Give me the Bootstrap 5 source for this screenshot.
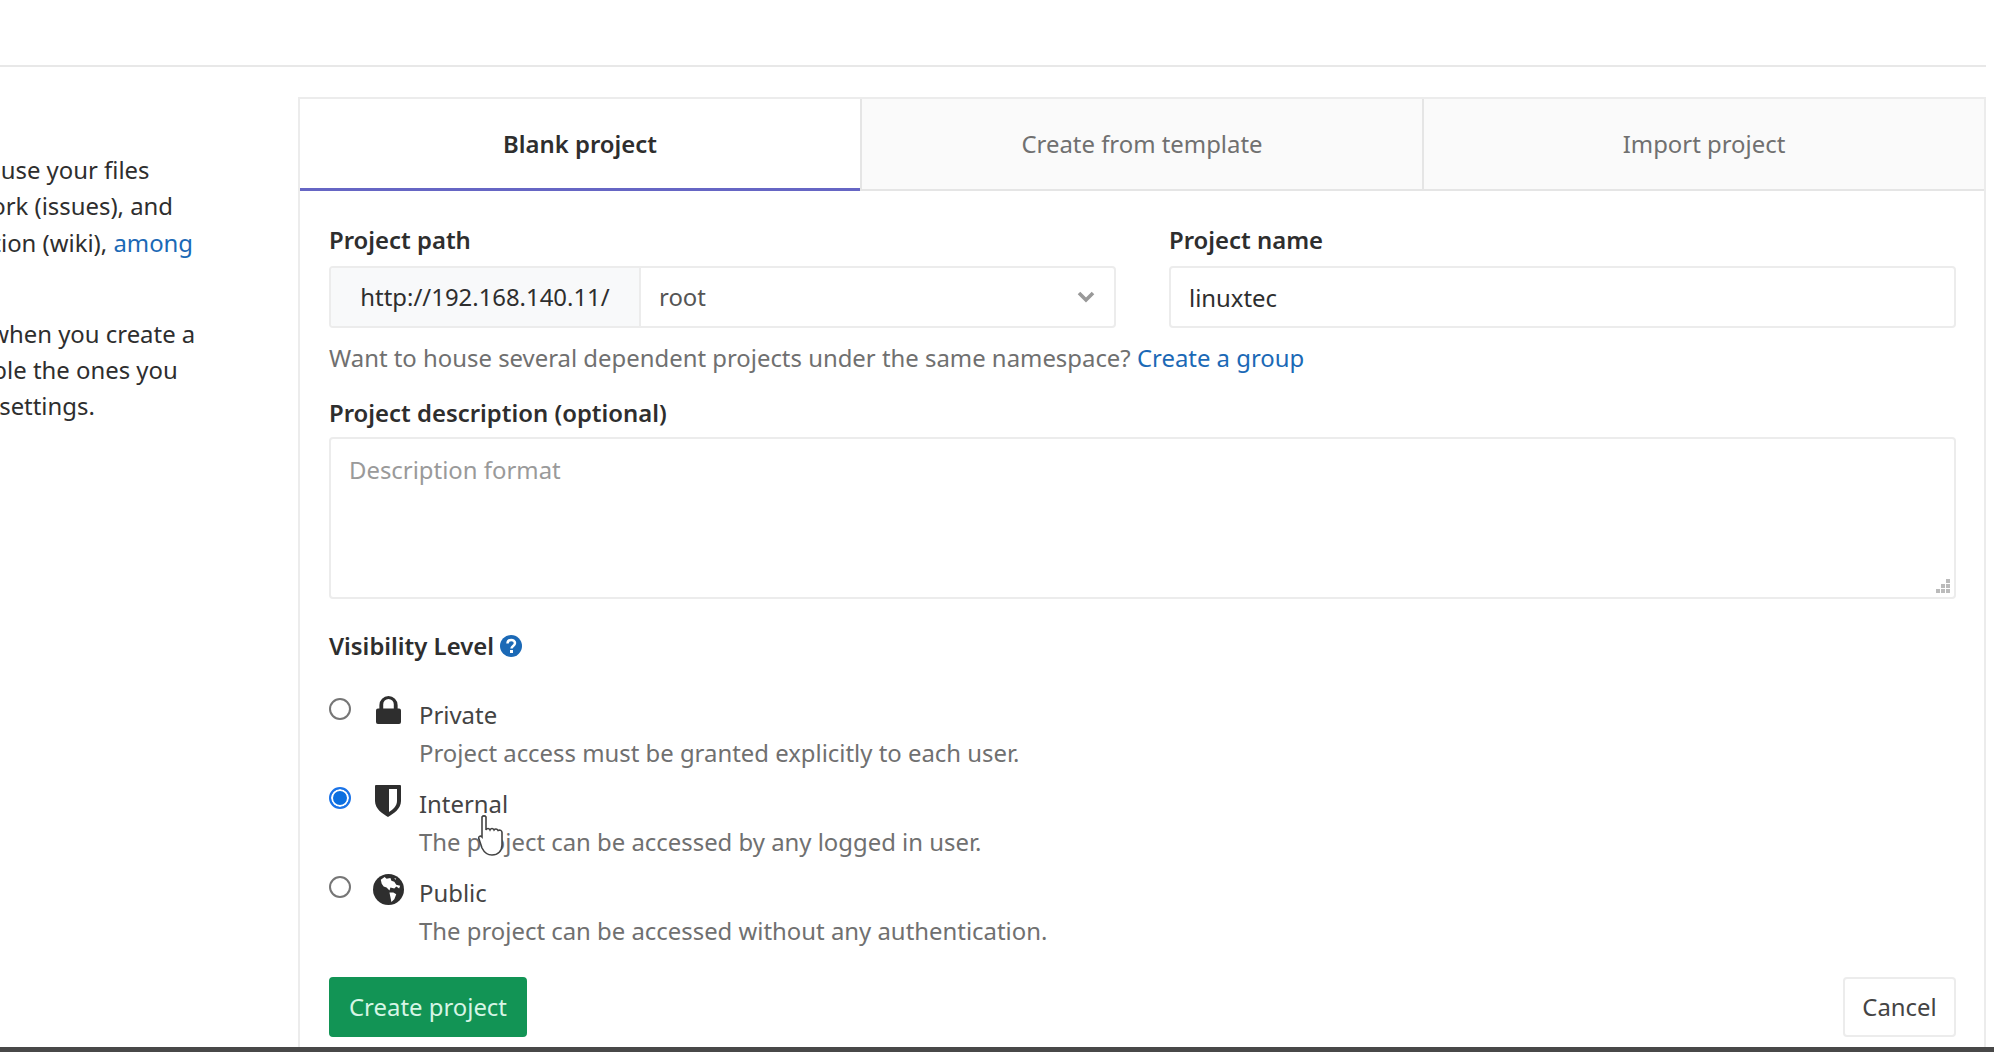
<!DOCTYPE html>
<html lang="en"><head><meta charset="utf-8"><title>New project</title>
<link rel="stylesheet" href="https://cdn.jsdelivr.net/npm/bootstrap@5.3.0/dist/css/bootstrap.min.css">
<style>
html,body{height:100%;overflow:hidden}
body{font-family:"Noto Sans","Open Sans",sans-serif;font-size:23.9px;color:#2e2e2e;background:#fff;position:relative}
.topgap{height:67px;border-bottom:2px solid #e8e8e8;margin-right:8px}
.pagewrap{padding-top:30px;margin-right:8px}
.sidecol{width:298px;flex:none;overflow:hidden;padding-top:55px;color:#2e2e2e;line-height:36.3px}
.sideinner{margin-left:-282px;white-space:nowrap}
.sideinner p{margin-bottom:55px}
a.lnk{color:#1b69b6;text-decoration:none}
.panelbox{flex:1;min-width:0;border:2px solid #ececec;border-bottom:0;height:960px}
.tabrow{height:92px}
.tabitem{flex:1 1 0;display:flex;align-items:center;justify-content:center;background:#fafafa;color:#707070;border-left:2px solid #e5e5e5;border-bottom:2px solid #e5e5e5;text-decoration:none}
.tabitem.onn{background:#fff;color:#2e2e2e;font-weight:600;border-left:0;border-bottom:3px solid #6666c4}
.formbody{padding:32px 28px 0 29px}
.twocols{gap:53px}
.halfcol{flex:1 1 0;min-width:0}
.lab{font-weight:600;margin-bottom:9px;line-height:34px;display:block}
.pathbox{height:62px;border:2px solid #ececec;border-radius:4px;overflow:hidden}
.pathpre{width:310px;flex:none;background:#f8f9fa;border-right:2px solid #ececec;display:flex;align-items:center;justify-content:center;color:#2e2e2e}
.pathsel{flex:1;display:flex;align-items:center;justify-content:space-between;padding:0 19px 0 18px;color:#555}
.inp{height:62px;border:2px solid #ececec;border-radius:4px;padding:2px 18px 0;display:flex;align-items:center;color:#2e2e2e}
.hintline{color:#707070;line-height:34px;margin-top:13px}
.desclab{margin-top:21px;margin-bottom:8px}
.descbox{height:162px;border:2px solid #ececec;border-radius:4px;padding:13px 18px;color:#9a9a9a;position:relative;margin-top:-1px}
.grip{position:absolute;right:3px;bottom:3px}
.vislab{font-weight:600;margin-top:30px;line-height:34px;display:flex;align-items:center;gap:6px}
.visrow{display:flex;height:89px}
.radwrap{width:38px;flex:none;padding-top:11px}
.radc{width:22px;height:22px;border-radius:50%;border:2px solid #767676;background:#fff;display:block}
.radc.sel{border:2px solid #1a73e8;background:#0b6fe0;box-shadow:inset 0 0 0 2px #fff}
.icowrap{width:42px;flex:none;display:flex;justify-content:center;align-items:flex-start;padding-top:9px}
.vistext{padding-left:10px;line-height:38px;padding-top:9px}
.vistitle{color:#444}
.visdesc{color:#707070}
.actbar{margin-top:23px}
.btnmake{background:#129455;border:2px solid #129455;color:#d6f5e5;font-size:23.9px;height:60px;width:198px;padding:0;border-radius:4px}
.btnstop{background:#fff;border:2px solid #ececec;color:#444;font-size:23.9px;height:60px;width:113px;padding:0;border-radius:4px}
.floorbar{position:absolute;left:0;right:0;bottom:0;height:5px;background:#484848}
.handptr{position:absolute;left:478px;top:815px}
</style></head><body>
<div class="topgap"></div>
<div class="d-flex pagewrap">
<div class="sidecol"><div class="sideinner">
<p>A project is where you house your files<br>(repository), plan your work (issues), and<br>publish your documentation (wiki), <a class="lnk" href="#">among</a></p>
<p>All features are enabled when you create a<br>project, but you can disable the ones you<br>don't need in the project settings.</p>
</div></div>
<div class="panelbox">
<div class="d-flex tabrow">
<a class="tabitem onn" href="#">Blank project</a>
<a class="tabitem" href="#">Create from template</a>
<a class="tabitem" href="#">Import project</a>
</div>
<div class="formbody">
<div class="d-flex twocols">
<div class="halfcol">
<label class="lab">Project path</label>
<div class="d-flex pathbox"><div class="pathpre">http://192.168.140.11/</div>
<div class="pathsel"><span>root</span><svg width="18" height="12" viewBox="0 0 18 12"><path d="M2 2l7 7 7-7" fill="none" stroke="#999" stroke-width="3.6"/></svg></div></div>
</div>
<div class="halfcol">
<label class="lab">Project name</label>
<div class="inp">linuxtec</div>
</div>
</div>
<div class="hintline">Want to house several dependent projects under the same namespace? <a class="lnk" href="#">Create a group</a></div>
<label class="lab desclab">Project description (optional)</label>
<div class="descbox">Description format
<svg class="grip" width="16" height="16" viewBox="0 0 16 16" fill="#bbb"><rect x="11" y="1" width="4" height="4"/><rect x="6" y="6" width="4" height="4"/><rect x="11" y="6" width="4" height="4"/><rect x="1" y="11" width="4" height="4"/><rect x="6" y="11" width="4" height="4"/><rect x="11" y="11" width="4" height="4"/></svg></div>
<div class="vislab">Visibility Level
<svg width="22" height="22" viewBox="0 0 22 22"><circle cx="11" cy="11" r="11" fill="#1b69b6"/><path d="M7.500 8.500c0-5 7.500-4.500 7.500-.5 0 3-3.500 2.800-3.500 5.500" fill="none" stroke="#fff" stroke-width="2.500"/><rect x="10" y="15" width="3" height="3" fill="#fff"/></svg></div>
<div class="mt-4">
<div class="visrow"><div class="radwrap"><span class="radc"></span></div>
<div class="icowrap"><svg width="25" height="28" viewBox="0 0 26 29"><path fill="#2e2e2e" fill-rule="evenodd" d="M7.500 13V8.500a5.500 5.500 0 0 1 11 0V13zM3.500 13V9.500a9.500 9.500 0 0 1 19 0V13H24a2 2 0 0 1 2 2v12a2 2 0 0 1-2 2H2a2 2 0 0 1-2-2V15a2 2 0 0 1 2-2z"/></svg></div>
<div class="vistext"><div class="vistitle">Private</div><div class="visdesc">Project access must be granted explicitly to each user.</div></div></div>
<div class="visrow"><div class="radwrap"><span class="radc sel"></span></div>
<div class="icowrap"><svg width="26" height="32" viewBox="0 0 26 32"><path fill="#2e2e2e" fill-rule="evenodd" d="M1 0h24a1 1 0 0 1 1 1v15c0 8-8 13-13 16C8 29 0 24 0 16V1a1 1 0 0 1 1-1zM14 4v23c4-2.500 8-6 8-11V4z"/></svg></div>
<div class="vistext"><div class="vistitle">Internal</div><div class="visdesc">The project can be accessed by any logged in user.</div></div></div>
<div class="visrow"><div class="radwrap"><span class="radc"></span></div>
<div class="icowrap"><svg width="31" height="31" viewBox="0 0 32 32"><circle cx="16" cy="16" r="16" fill="#2e2e2e"/><path fill="#fff" d="M8 6l4-3 2 2 4-1 1 3 3 1 2 3 4 1-1 3-3-2-2 2-4-1-1 3-3-3-3-1-2-3zM17 19l4 0 3 2-2 5-3 3-1-5zM22 4l2 1-1 1z"/></svg></div>
<div class="vistext"><div class="vistitle">Public</div><div class="visdesc">The project can be accessed without any authentication.</div></div></div>
</div>
<div class="d-flex justify-content-between actbar"><button class="btn btnmake">Create project</button><button class="btn btnstop">Cancel</button></div>
</div>
</div>
</div>
<svg class="handptr" width="26" height="42" viewBox="0 0 26 42"><path fill="#fff" stroke="#444" stroke-width="1.600" d="M4 2c1-1.500 3-1.500 4 0v13c1-2 3-2 4 0 1-2 3-2 4 0 1-1.500 3-1.500 4 .5 2-1 4 0 4 2V30c0 6-4 10-10 10-5 0-8-3-10-7L1 24c-1-2 1-4 3-2z"/></svg>
<div class="floorbar"></div>
<script src="https://cdn.jsdelivr.net/npm/bootstrap@5.3.0/dist/js/bootstrap.bundle.min.js"></script>
</body></html>
